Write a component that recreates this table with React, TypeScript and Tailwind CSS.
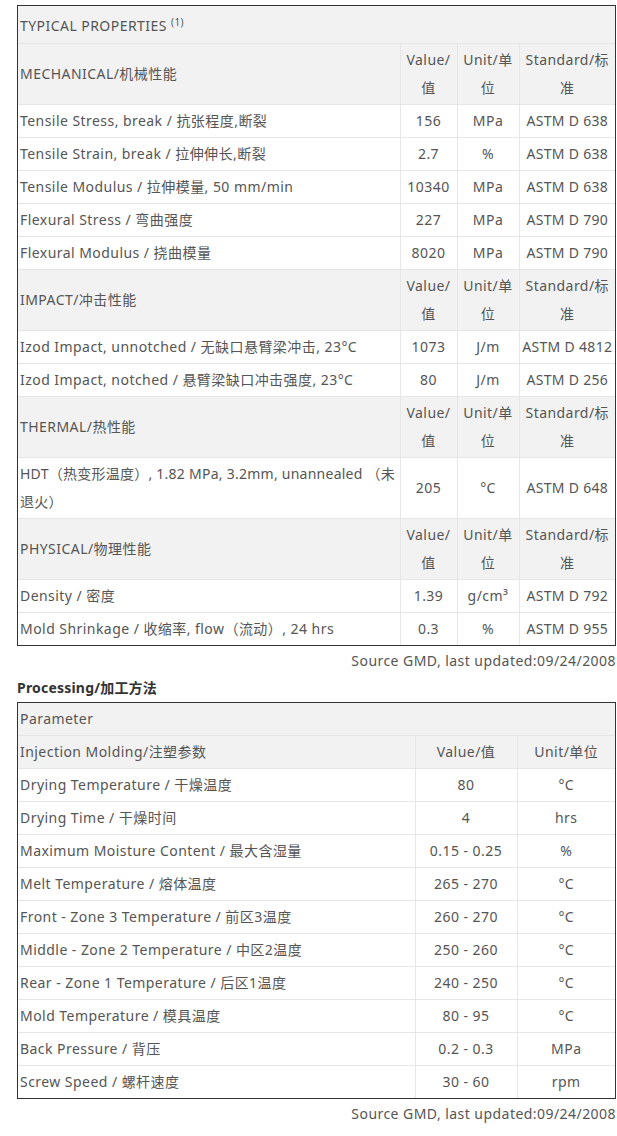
import React from "react";

type Row = [string, string, string, string?];

const font = { fontFamily: '"Noto Sans", "Noto Sans CJK SC", sans-serif' };

const groups: { title: string; rows: Row[] }[] = [
  {
    title: "MECHANICAL/机械性能",
    rows: [
      ["Tensile Stress, break / 抗张程度,断裂", "156", "MPa", "ASTM D 638"],
      ["Tensile Strain, break / 拉伸伸长,断裂", "2.7", "%", "ASTM D 638"],
      ["Tensile Modulus / 拉伸模量, 50 mm/min", "10340", "MPa", "ASTM D 638"],
      ["Flexural Stress / 弯曲强度", "227", "MPa", "ASTM D 790"],
      ["Flexural Modulus / 挠曲模量", "8020", "MPa", "ASTM D 790"],
    ],
  },
  {
    title: "IMPACT/冲击性能",
    rows: [
      ["Izod Impact, unnotched / 无缺口悬臂梁冲击, 23°C", "1073", "J/m", "ASTM D 4812"],
      ["Izod Impact, notched / 悬臂梁缺口冲击强度, 23°C", "80", "J/m", "ASTM D 256"],
    ],
  },
  {
    title: "THERMAL/热性能",
    rows: [
      ["HDT（热变形温度）, 1.82 MPa, 3.2mm, unannealed （未退火）", "205", "°C", "ASTM D 648"],
    ],
  },
  {
    title: "PHYSICAL/物理性能",
    rows: [
      ["Density / 密度", "1.39", "g/cm³", "ASTM D 792"],
      ["Mold Shrinkage / 收缩率, flow（流动）, 24 hrs", "0.3", "%", "ASTM D 955"],
    ],
  },
];

const processing: Row[] = [
  ["Drying Temperature / 干燥温度", "80", "°C"],
  ["Drying Time / 干燥时间", "4", "hrs"],
  ["Maximum Moisture Content / 最大含湿量", "0.15 - 0.25", "%"],
  ["Melt Temperature / 熔体温度", "265 - 270", "°C"],
  ["Front - Zone 3 Temperature / 前区3温度", "260 - 270", "°C"],
  ["Middle - Zone 2 Temperature / 中区2温度", "250 - 260", "°C"],
  ["Rear - Zone 1 Temperature / 后区1温度", "240 - 250", "°C"],
  ["Mold Temperature / 模具温度", "80 - 95", "°C"],
  ["Back Pressure / 背压", "0.2 - 0.3", "MPa"],
  ["Screw Speed / 螺杆速度", "30 - 60", "rpm"],
];

const td = "border border-[#e6e6e6] px-[2px] py-[2px] leading-[28px] align-middle";
const tdc = td + " text-center";
const head = "bg-[#f2f2f2]";

const Source = () => (
  <div className="text-right text-[14px] leading-[20px] text-[#555] mt-[5px]">
    Source GMD, last updated:09/24/2008
  </div>
);

export default function App() {
  return (
    <div
      className="bg-white w-[617px] min-h-[1136px] pl-[17px] pt-[5px] text-[#555] text-[14px] tracking-[0.45px]"
      style={font}
    >
      <div className="w-[599px]">
        <div className="border border-[#333]">
          <table className="w-full border-collapse border-hidden table-fixed">
            <colgroup>
              <col className="w-[382px]" />
              <col className="w-[57px]" />
              <col className="w-[62px]" />
              <col className="w-[96px]" />
            </colgroup>
            <tbody>
              <tr className={head}>
                <td colSpan={4} className={td + " h-[37px] pt-[6px]"}>
                  TYPICAL PROPERTIES <sup className="text-[10px]">(1)</sup>
                </td>
              </tr>
              {groups.map((g) => (
                <React.Fragment key={g.title}>
                  <tr className={head}>
                    <td className={td}>{g.title}</td>
                    <td className={tdc}>Value/值</td>
                    <td className={tdc}>Unit/单位</td>
                    <td className={tdc}>Standard/标准</td>
                  </tr>
                  {g.rows.map((r) => (
                    <tr key={r[0]}>
                      <td className={td + (r[0].startsWith("HDT") ? " tracking-[0.25px]" : "")}>{r[0]}</td>
                      <td className={tdc}>{r[1]}</td>
                      <td className={tdc}>{r[2]}</td>
                      <td className={tdc + " whitespace-nowrap tracking-[0.3px]"}>{r[3]}</td>
                    </tr>
                  ))}
                </React.Fragment>
              ))}
            </tbody>
          </table>
        </div>
        <Source />

        <div className="mt-[7px] font-bold text-[#333] leading-[20px] tracking-[0.2px]">Processing/加工方法</div>

        <div className="border border-[#333] mt-[4px]">
          <table className="w-full border-collapse border-hidden table-fixed">
            <colgroup>
              <col className="w-[397px]" />
              <col className="w-[102px]" />
              <col className="w-[98px]" />
            </colgroup>
            <tbody>
              <tr className={head}>
                <td colSpan={3} className={td}>Parameter</td>
              </tr>
              <tr className={head}>
                <td className={td}>Injection Molding/注塑参数</td>
                <td className={tdc}>Value/值</td>
                <td className={tdc}>Unit/单位</td>
              </tr>
              {processing.map((r) => (
                <tr key={r[0]}>
                  <td className={td}>{r[0]}</td>
                  <td className={tdc}>{r[1]}</td>
                  <td className={tdc}>{r[2]}</td>
                </tr>
              ))}
            </tbody>
          </table>
        </div>
        <Source />
      </div>
    </div>
  );
}
